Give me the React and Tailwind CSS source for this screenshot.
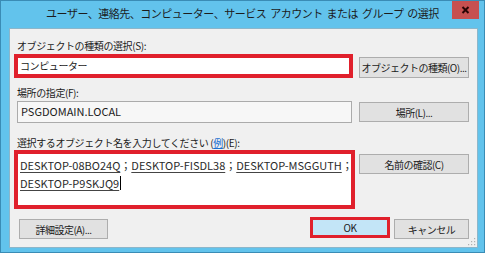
import React from 'react';

const jp = { fontFamily: '"Noto Sans CJK JP", "Noto Sans", sans-serif' };

// Windows-style push button
const Btn = ({ children, className = '' }) => (
  <div
    className={`flex items-center justify-center border border-[#adadad] bg-[#e1e1e1] text-[10px] tracking-[-0.5px] text-[#1b1b1b] ${className}`}
  >
    {children}
  </div>
);

const Name = ({ children }) => <span className="underline decoration-[#444] underline-offset-[2px]">{children}</span>;

export default function App() {
  return (
    <div style={jp} className="flex h-[253px] w-[485px] flex-col border border-[#3a8cb5] bg-[#62c3ec]">
      {/* Title bar */}
      <div className="relative flex h-[27px] shrink-0 items-center justify-center">
        <span className="pb-[2px] text-[11px] tracking-[-0.5px] text-[#1c1c1c] [word-spacing:2px]">
          ユーザー、連絡先、コンピューター、サービス アカウント または グループ の選択
        </span>
        <div className="absolute right-[5px] top-0 flex h-[18px] w-[27px] items-center justify-center bg-[#c75050]">
          <svg width="9" height="8" viewBox="0 0 9 8">
            <path d="M1.5 1 L7.5 7 M7.5 1 L1.5 7" stroke="#2a0505" strokeWidth="2" />
          </svg>
        </div>
      </div>

      {/* Dialog body */}
      <div className="relative ml-[8px] h-[220px] w-[469px] border border-[#8cb6ca] bg-[#f0f0f0] text-[10px] tracking-[-0.4px] text-[#1b1b1b]">
        <div className="ml-[7px] mt-[10px] leading-[14px]">オブジェクトの種類の選択(S):</div>
        <div className="mt-[1px] flex items-start">
          <div className="ml-[4px] flex h-[24px] w-[339px] items-center border-4 border-[#e0202c] bg-white pb-[2px] pl-[2px]">
            コンピューター
          </div>
          <Btn className="ml-[6px] mt-[3px] h-[21px] w-[110px]">オブジェクトの種類(O)...</Btn>
        </div>

        <div className="ml-[7px] mt-[8px] leading-[14px]">場所の指定(F):</div>
        <div className="mt-[1px] flex items-start">
          <div className="ml-[7px] flex h-[22px] w-[335px] items-center border border-[#ababab] bg-[#f7f7f7] pb-[1px] pl-[3px] text-[11px] tracking-[0px]">
            PSGDOMAIN.LOCAL
          </div>
          <Btn className="ml-[7px] mt-[1px] h-[20px] w-[110px]">場所(L)...</Btn>
        </div>

        <div className="ml-[7px] mt-[13px] leading-[14px]">
          選択するオブジェクト名を入力してください (<span className="text-[#1a6fd0] underline">例</span>)(E):
        </div>
        <div className="flex items-start">
          <div className="ml-[4px] h-[59px] w-[341px] border-4 border-[#e0202c] bg-white pl-[2px] pt-[2px] text-[11px] leading-[18px] tracking-[0px] text-[#2a2a2a]">
            <div className="whitespace-nowrap">
              <Name>DESKTOP-08BO24Q</Name>；<Name>DESKTOP-FISDL38</Name>；<Name>DESKTOP-MSGGUTH</Name>；
            </div>
            <div className="flex items-center whitespace-nowrap">
              <Name>DESKTOP-P9SKJQ9</Name>
              <span className="ml-[1px] inline-block h-[14px] w-[1px] bg-black" />
            </div>
          </div>
          <Btn className="ml-[4px] mt-[4px] h-[20px] w-[110px]">名前の確認(C)</Btn>
        </div>

        <div className="mt-[8px] flex items-start">
          <Btn className="ml-[9px] mt-[2px] h-[20px] w-[89px]">詳細設定(A)...</Btn>
          <div className="ml-auto flex h-[21px] w-[80px] items-center justify-center border-[3px] border-[#e0202c] bg-[#c3e5f7] text-[10px]">
            OK
          </div>
          <Btn className="ml-[4px] mr-[8px] mt-[2px] h-[20px] w-[75px]">キャンセル</Btn>
        </div>

        {/* resize grip */}
        <svg className="absolute bottom-[1px] right-[1px]" width="8" height="8" viewBox="0 0 8 8">
          <rect x="6" y="0" width="1.2" height="1.2" fill="#b0b0b0" />
          <rect x="3" y="3" width="1.2" height="1.2" fill="#b0b0b0" />
          <rect x="6" y="3" width="1.2" height="1.2" fill="#b0b0b0" />
          <rect x="0" y="6" width="1.2" height="1.2" fill="#b0b0b0" />
          <rect x="3" y="6" width="1.2" height="1.2" fill="#b0b0b0" />
          <rect x="6" y="6" width="1.2" height="1.2" fill="#b0b0b0" />
        </svg>
      </div>
    </div>
  );
}
